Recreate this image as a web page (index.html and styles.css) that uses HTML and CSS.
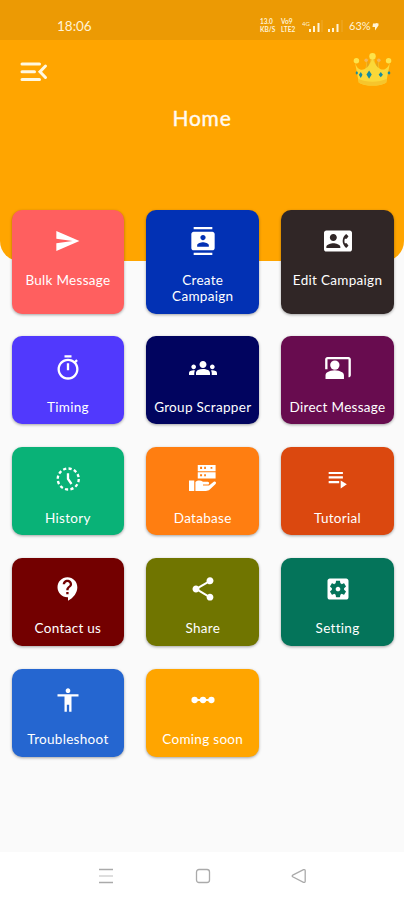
FILE: index.html
```html
<!DOCTYPE html>
<html lang="en">
<head>
    <meta charset="UTF-8">
    <title>Home</title>
    <link rel="stylesheet" href="styles.css">
</head>
<body>
<div class="phone">
    <header class="header">
        <div class="status">
            <span class="time">18:06</span>
            <div class="status-right">
                <div class="stack"><b>13.0</b><b>KB/S</b></div>
                <div class="stack"><b>Vo9</b><b>LTE2</b></div>
                <svg class="signal" width="21" height="14" viewBox="0 0 21 14">
                    <text x="0" y="6.500" font-size="6">4G</text>
                    <path d="M7 10h2v3H7zM11 7h2v6h-2zM15.500 4h2v9h-2z"/>
                    <path class="faint" d="M19.500 1h1v12h-1z"/>
                </svg>
                <svg class="signal" width="16" height="14" viewBox="0 0 16 14">
                    <path d="M0 10h2v3H0zM4 9h2v4H4zM8.500 5h2v8h-2z"/>
                    <path class="faint" d="M13.500 1h1v12h-1z"/>
                </svg>
                <span class="battery">63%</span>
                <svg class="bolt" width="7" height="9" viewBox="0 0 7 9"><path d="M1 1.500h2.500L4 1l2.500.5v2L3 8.500V5H.5z"/></svg>
            </div>
        </div>
        <div class="toolbar">
            <svg class="menu" width="28" height="22" viewBox="0 0 28 22">
                <path d="M2 3h17.500M2 10.700h12.500M2 18.400h17.500M25.500 5L20 10.700l5.500 5.800"/>
            </svg>
            <svg class="crown" width="39" height="34" viewBox="0 0 40 34">
                <path fill="#f3c22d" d="M9 27C13 20 14 13 13 9l7-5 7 5c-1 5 0 12 5 18z"/>
                <path fill="#ffa500" d="M14 8l4-2c0 4-1 7-4 9zM26 8l-4-2c0 4 1 7 4 9z"/>
                <path fill="#e5a51f" d="M12 19c3-4 3-8 2-11 3 4 4 7 3 11zM28 19c-3-4-3-8-2-11-3 4-4 7-3 11z"/>
                <path fill="#fbd838" d="M2 10c2 7 6 9 10 7 4-2 6-6 8-11 2 5 4 9 8 11 4 2 8-1 10-7l-4 21c-7 4-21 4-28 0z"/>
                <path fill="#f6c52c" d="M5.200 27c8 4 21.600 4 29.600 0L34 31c-7 4-21 4-28 0z"/>
                <circle fill="#fde34b" cx="20" cy="4" r="3.300"/>
                <circle fill="#fde34b" cx="3.500" cy="8.500" r="2.800"/>
                <circle fill="#fde34b" cx="36.500" cy="8.500" r="2.800"/>
                <circle fill="#f3b65a" cx="13.500" cy="8" r="1.800"/>
                <circle fill="#f3b65a" cx="26.500" cy="8" r="1.800"/>
                <path fill="#168b9f" d="M16.500 18.500l2.700 4.200-2.700 4.300-2.700-4.300zM8 20l1.700 3L8 26.200 6 23zM28.500 20.200l2.200 2.600-2.200 2.700-2.200-2.700zM4 19l1.200 2L4 23l-1.500-2zM37 19l1.500 2-1.500 2-1.700-2z"/>
            </svg>
        </div>
        <h1 class="title">Home</h1>
    </header>

    <main class="grid">
        <div class="card bulk">
            <svg class="icon" viewBox="0 0 24 24"><path d="M2.010 20.600L21.800 12 2.010 3.400 2 10l14 2-14 2z"/></svg>
            <span class="label">Bulk Message</span>
        </div>
        <div class="card create">
            <svg class="icon" viewBox="0 0 24 24"><path d="M20 0H4v2h16V0zM4 24h16v-2H4v2zM20 4H4c-1.100 0-2 .9-2 2v12c0 1.100.9 2 2 2h16c1.100 0 2-.9 2-2V6c0-1.100-.9-2-2-2zm-8 2.750c1.240 0 2.250 1.010 2.250 2.250s-1.010 2.250-2.250 2.250S9.750 10.240 9.750 9 10.760 6.750 12 6.750zM17 17H7v-1.500c0-1.670 3.330-2.500 5-2.500s5 .83 5 2.500V17z"/></svg>
            <span class="label">Create Campaign</span>
        </div>
        <div class="card edit">
            <svg class="icon" viewBox="0 0 24 24"><path d="M22 3H2C.9 3 0 3.900 0 5v14c0 1.100.9 2 2 2h20c1.100 0 1.990-.9 1.990-2L24 5c0-1.100-.9-2-2-2zM8 6c1.660 0 3 1.340 3 3s-1.340 3-3 3-3-1.340-3-3 1.340-3 3-3zm6 12H2v-1c0-2 4-3.100 6-3.100s6 1.100 6 3.100v1zm3.850-4h1.640L21 16l-1.990 1.990c-1.310-.98-2.280-2.380-2.730-3.990-.18-.64-.28-1.310-.28-2s.1-1.360.28-2c.45-1.620 1.420-3.010 2.730-3.990L21 8l-1.510 2h-1.640c-.22.63-.35 1.300-.35 2s.13 1.370.35 2z"/></svg>
            <span class="label">Edit Campaign</span>
        </div>
        <div class="card timing">
            <svg class="icon" viewBox="0 0 24 24"><path d="M15 1H9v2h6V1zm-4 13h2V8h-2v6zm8.030-6.610l1.420-1.420c-.43-.51-.9-.99-1.410-1.410l-1.420 1.420C16.070 4.740 14.120 4 12 4c-4.970 0-9 4.030-9 9s4.020 9 9 9 9-4.030 9-9c0-2.120-.74-4.070-1.970-5.610zM12 20c-3.870 0-7-3.130-7-7s3.130-7 7-7 7 3.130 7 7-3.130 7-7 7z"/></svg>
            <span class="label">Timing</span>
        </div>
        <div class="card group">
            <svg class="icon" viewBox="0 0 24 24"><path d="M12 12.750c1.630 0 3.070.39 4.240.9 1.080.48 1.760 1.560 1.760 2.730V18H6v-1.610c0-1.180.68-2.260 1.760-2.730 1.170-.52 2.610-.91 4.240-.91zM4 13c1.100 0 2-.9 2-2s-.9-2-2-2-2 .9-2 2 .9 2 2 2zm1.130 1.100C4.760 14.040 4.390 14 4 14c-.99 0-1.930.21-2.780.58C.48 14.900 0 15.620 0 16.430V18h4.500v-1.610c0-.83.23-1.610.63-2.290zM20 13c1.100 0 2-.9 2-2s-.9-2-2-2-2 .9-2 2 .9 2 2 2zm4 3.430c0-.81-.48-1.530-1.220-1.850-.85-.37-1.790-.58-2.780-.58-.39 0-.76.04-1.130.1.4.68.63 1.460.63 2.290V18H24v-1.570zM12 6c1.660 0 3 1.340 3 3s-1.340 3-3 3-3-1.340-3-3 1.340-3 3-3z"/></svg>
            <span class="label">Group Scrapper</span>
        </div>
        <div class="card direct">
            <svg class="icon" viewBox="0 0 24 24"><path d="M21 2.500H3c-1.100 0-2 .9-2 2V13h2V4.500h18V20c1.100 0 2-.9 2-2V4.500c0-1.100-.9-2-2-2z"/><circle cx="9.300" cy="9.500" r="4"/><path d="M15.500 15.600C13.800 14.700 11.600 14 9.200 14s-4.600.7-6.300 1.600c-1 .5-1.600 1.600-1.600 2.700V21.500h15.800v-3.200c0-1.100-.6-2.200-1.600-2.700z"/></svg>
            <span class="label">Direct Message</span>
        </div>
        <div class="card history">
            <svg class="icon" viewBox="0 0 24 24"><circle class="dashed" cx="12.200" cy="12" r="9"/><path class="line" d="M12 7v5l3 4.300"/></svg>
            <span class="label">History</span>
        </div>
        <div class="card database">
            <svg class="icon" viewBox="0 0 24 24"><path fill-rule="evenodd" d="M7.500 0h15.300v5.300H7.500zM9.500 1.500v2h1.700v-2zM13 1.500v2h1.500v-2zM18.500 1.800v1.500H20V1.800zM7.500 6.300h15.300v5.200H7.500zM9.500 8v1.700h1.700V8zM13 8v1.700h1.500V8z"/><path d="M0 13.200h4.500v9H0zM5.500 14.500c2-1.700 4.500-1.600 6.500-.2h4c1.700.2 1.600 2.300 0 2.500h-4v.7h5.200l4-3.200c1.300-.8 2.700.6 1.600 1.900l-5 4.800c-1 .9-2 1.200-3.300 1.200h-9z"/></svg>
            <span class="label">Database</span>
        </div>
        <div class="card tutorial">
            <svg class="icon" viewBox="0 0 24 24"><path d="M4 6h12.200v1.700H4zM4 9.600h12.200v1.900H4zM4 13.700h9v1.900H4zM14.300 13.200l5.300 3.400-5.300 3.500z"/></svg>
            <span class="label">Tutorial</span>
        </div>
        <div class="card contact">
            <svg class="icon" viewBox="0 0 24 24"><path d="M11.500 2C6.810 2 3 5.810 3 10.500S6.810 19 11.500 19h.5v3c4.860-2.340 8-7 8-11.500C20 5.810 16.190 2 11.500 2zm1 14.500h-2v-2h2v2zm0-3.500h-2c0-3.250 3-3 3-5 0-1.100-.9-2-2-2s-2 .9-2 2h-2c0-2.210 1.790-4 4-4s4 1.790 4 4c0 2.500-3 2.750-3 5z"/></svg>
            <span class="label">Contact us</span>
        </div>
        <div class="card share">
            <svg class="icon" viewBox="0 0 24 24"><path d="M18 16.080c-.76 0-1.440.3-1.960.77L8.910 12.700c.05-.23.09-.46.09-.7s-.04-.47-.09-.7l7.050-4.110c.54.5 1.250.81 2.040.81 1.660 0 3-1.340 3-3s-1.340-3-3-3-3 1.340-3 3c0 .24.04.47.09.7L8.040 9.810C7.500 9.310 6.790 9 6 9c-1.660 0-3 1.340-3 3s1.340 3 3 3c.79 0 1.500-.31 2.040-.81l7.120 4.160c-.05.21-.08.43-.08.65 0 1.610 1.310 2.920 2.920 2.920s2.920-1.310 2.920-2.920-1.310-2.920-2.920-2.920z"/></svg>
            <span class="label">Share</span>
        </div>
        <div class="card setting">
            <svg class="icon" viewBox="0 0 24 24"><path d="M12 10c-1.100 0-2 .9-2 2s.9 2 2 2 2-.9 2-2-.9-2-2-2zm7-7H5c-1.110 0-2 .9-2 2v14c0 1.100.89 2 2 2h14c1.110 0 2-.9 2-2V5c0-1.100-.89-2-2-2zm-1.750 9c0 .23-.02.46-.05.68l1.480 1.160c.13.11.17.3.08.45l-1.400 2.420c-.09.15-.27.21-.43.15l-1.740-.7c-.36.28-.76.51-1.180.69l-.26 1.850c-.03.17-.18.3-.35.3h-2.800c-.17 0-.32-.13-.35-.29l-.26-1.850c-.43-.18-.82-.41-1.180-.69l-1.740.7c-.16.06-.34 0-.43-.15l-1.400-2.420c-.09-.15-.05-.34.08-.45l1.480-1.160c-.03-.23-.05-.46-.05-.69 0-.23.02-.46.05-.68l-1.480-1.160c-.13-.11-.17-.3-.08-.45l1.400-2.420c.09-.15.27-.21.43-.15l1.740.7c.36-.28.76-.51 1.180-.69l.26-1.850c.03-.17.18-.3.35-.3h2.800c.17 0 .32.13.35.29l.26 1.850c.43.18.82.41 1.180.69l1.740-.7c.16-.06.34 0 .43.15l1.400 2.420c.09.15.05.34-.08.45l-1.480 1.160c.03.23.05.46.05.69z"/></svg>
            <span class="label">Setting</span>
        </div>
        <div class="card trouble">
            <svg class="icon" viewBox="0 0 24 24"><path d="M12 2c1.100 0 2 .9 2 2s-.9 2-2 2-2-.9-2-2 .9-2 2-2zm9 7h-6v13h-2v-6h-2v6H9V9H3V7h18v2z"/></svg>
            <span class="label">Troubleshoot</span>
        </div>
        <div class="card soon">
            <svg class="icon" viewBox="0 0 24 24"><path d="M4.500 11.200h15v1.600h-15z"/><circle cx="4.800" cy="12" r="2.700"/><circle cx="12" cy="12" r="2.700"/><circle cx="19.200" cy="12" r="2.700"/></svg>
            <span class="label">Coming soon</span>
        </div>
    </main>

    <nav class="navbar">
        <svg width="16" height="16" viewBox="0 0 16 16"><path d="M1 1.500h14M1 14.500h14"/><path class="mid" d="M1 8h14"/></svg>
        <svg width="16" height="16" viewBox="0 0 16 16"><rect x="1.500" y="1.500" width="13" height="13" rx="2.500"/></svg>
        <svg width="16" height="16" viewBox="0 0 16 16"><path d="M1.700 7.200L12.500 1.700q1.700-.5 1.700 1v10.600q0 1.500-1.700 1L1.700 8.800q-1-.8 0-1.600z"/></svg>
    </nav>
</div>
</body>
</html>
```
FILE: styles.css
```css
*{
    box-sizing: border-box;
}
body{
    margin: 0;
    font-family: Lato, "Liberation Sans", sans-serif;
    background-color: #fafafa;
}
.phone{
    display: flex;
    flex-direction: column;
    height: 900px;
    overflow: hidden;
}
/* header */
.header{
    flex: none;
    height: 261px;
    background-color: #ffa500;
    border-radius: 0 0 20px 20px;
    overflow: hidden;
}
.status{
    display: flex;
    justify-content: space-between;
    height: 40px;
    padding: 18px 25px 0 57px;
    background-color: #ec9a04;
    color: #fff3d6;
}
.time{
    font-size: 13.5px;
    line-height: 16px;
}
.status-right{
    display: flex;
    align-items: flex-start;
    height: 16px;
}
.stack{
    display: flex;
    flex-direction: column;
    width: 16px;
    margin-right: 5px;
    font-size: 6.5px;
    line-height: 8px;
}
.signal{
    fill: #fff3d6;
    margin-right: 5px;
    margin-top: 1px;
}
.signal .faint{
    opacity: .2;
}
.battery{
    width: 21px;
    font-size: 11px;
    line-height: 16px;
}
.bolt{
    fill: #fff3d6;
    margin: 4px 0 0 2px;
}
.toolbar{
    display: flex;
    justify-content: space-between;
    align-items: flex-start;
    height: 64px;
    padding: 12px 12px 0 20px;
}
.menu{
    margin-top: 9px;
    fill: none;
    stroke: #fff8e0;
    stroke-width: 3;
    stroke-linecap: round;
}
.title{
    margin: 0;
    font-size: 21px;
    font-weight: 400;
    line-height: 28px;
    letter-spacing: .8px;
    text-align: center;
    color: #fffaf0;
    -webkit-text-stroke: .4px #fffaf0;
}
/* cards */
.grid{
    flex: 1;
    display: grid;
    grid-template-columns: repeat(3, 112.5px);
    grid-template-rows: 104px repeat(4, 88px);
    column-gap: 22.3px;
    row-gap: 22.8px;
    margin-top: -51.500px;
    padding-left: 11.700px;
    z-index: 1;
}
.card{
    display: flex;
    flex-direction: column;
    align-items: center;
    padding: 17.500px 5px 0;
    border-radius: 10px;
    box-shadow: 0 1px 3px rgba(0,0,0,.35);
    color: #fff;
}
.icon{
    flex: none;
    width: 28px;
    height: 28px;
    fill: #fff;
}
.label{
    margin-top: 17px;
    font-size: 13.5px;
    line-height: 16px;
    letter-spacing: .3px;
    text-align: center;
}
.dashed{
    fill: none;
    stroke: #fff;
    stroke-width: 2;
    stroke-dasharray: 2.700 2.012;
}
.line{
    fill: none;
    stroke: #fff;
    stroke-width: 2;
}
.bulk{ background-color: #ff5f5f; }
.create{ background-color: #0231b4; }
.edit{ background-color: #302626; }
.timing{ background-color: #5139fd; }
.group{ background-color: #01045f; }
.direct{ background-color: #680c4f; }
.history{ background-color: #09b277; }
.database{ background-color: #ff7e11; }
.tutorial{ background-color: #db480f; }
.contact{ background-color: #730000; }
.share{ background-color: #707500; }
.setting{ background-color: #04745a; }
.trouble{ background-color: #2566d0; }
.soon{ background-color: #ffa500; }
/* system navigation */
.navbar{
    flex: none;
    display: flex;
    justify-content: space-between;
    align-items: center;
    height: 48px;
    padding: 0 97px 0 98px;
    background-color: #fff;
}
.navbar svg{
    fill: none;
    stroke: #aaa;
    stroke-width: 1.3;
}
.navbar .mid{
    stroke: #ccc;
}
```
